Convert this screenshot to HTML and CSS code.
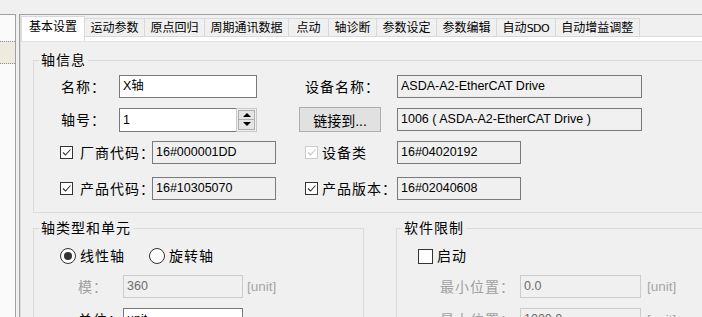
FILE: index.html
```html
<!DOCTYPE html>
<html lang="zh-CN">
<head>
  <meta charset="UTF-8">
  <title>轴设置</title>
  <link rel="stylesheet" href="styles.css">
</head>
<body>
  <div class="window">
    <div class="tree">
      <div class="tree-item"></div>
    </div>

    <div class="tabs">
      <div class="tab-strip">
        <div class="tab active">基本设置</div>
        <div class="tab">运动参数</div>
        <div class="tab">原点回归</div>
        <div class="tab">周期通讯数据</div>
        <div class="tab">点动</div>
        <div class="tab">轴诊断</div>
        <div class="tab">参数设定</div>
        <div class="tab">参数编辑</div>
        <div class="tab">自动<span class="lat">SDO</span></div>
        <div class="tab">自动增益调整</div>
      </div>

      <div class="tab-page">
        <div class="page-body">
          <fieldset class="group group-info">
            <legend>轴信息</legend>
            <div class="group-body">
              <div class="row">
                <div class="half">
                  <span class="lbl">名称：</span>
                  <div class="box w-name">X轴</div>
                </div>
                <div class="half-r">
                  <span class="lbl lbl-r">设备名称：</span>
                  <div class="box ro w-long">ASDA-A2-EtherCAT Drive</div>
                </div>
              </div>

              <div class="row row-tall">
                <div class="half">
                  <span class="lbl">轴号：</span>
                  <div class="spin">
                    <div class="box spin-input">1</div>
                    <div class="spin-btns">
                      <div class="spin-btn"><span class="arrow-up"></span></div>
                      <div class="spin-btn"><span class="arrow-down"></span></div>
                    </div>
                  </div>
                </div>
                <div class="half-r">
                  <button class="btn">链接到...</button>
                  <div class="box ro w-long">1006 ( ASDA-A2-EtherCAT Drive )</div>
                </div>
              </div>

              <div class="row row-wide-gap">
                <div class="half">
                  <span class="chk first"><svg viewBox="0 0 11 11"><path d="M2 5.5 L4.5 8 L9.5 2.5"/></svg></span>
                  <span class="lbl lbl-chk">厂商代码：</span>
                  <div class="box ro w-code">16#000001DD</div>
                </div>
                <div class="half-r">
                  <span class="chk right disabled"><svg viewBox="0 0 11 11"><path d="M2 5.5 L4.5 8 L9.5 2.5"/></svg></span>
                  <span class="lbl lbl-chk-r">设备类</span>
                  <div class="box ro w-code">16#04020192</div>
                </div>
              </div>

              <div class="row">
                <div class="half">
                  <span class="chk first"><svg viewBox="0 0 11 11"><path d="M2 5.5 L4.5 8 L9.5 2.5"/></svg></span>
                  <span class="lbl lbl-chk">产品代码：</span>
                  <div class="box ro w-code">16#10305070</div>
                </div>
                <div class="half-r">
                  <span class="chk right"><svg viewBox="0 0 11 11"><path d="M2 5.5 L4.5 8 L9.5 2.5"/></svg></span>
                  <span class="lbl lbl-chk-r">产品版本：</span>
                  <div class="box ro w-code">16#02040608</div>
                </div>
              </div>
            </div>
          </fieldset>

          <div class="lower">
            <fieldset class="group group-type">
              <legend>轴类型和单元</legend>
              <div class="group-body">
                <div class="opt-row">
                  <label class="radio-item">
                    <span class="radio on"></span>
                    <span class="opt-text">线性轴</span>
                  </label>
                  <label class="radio-item">
                    <span class="radio"></span>
                    <span class="opt-text">旋转轴</span>
                  </label>
                </div>
                <div class="field-row">
                  <span class="lbl lbl-off lbl-unit">模：</span>
                  <div class="box off w-mid">360</div>
                  <span class="unit">[unit]</span>
                </div>
                <div class="field-row">
                  <span class="lbl lbl-unit">单位：</span>
                  <div class="box w-mid">unit</div>
                </div>
              </div>
            </fieldset>

            <fieldset class="group group-limit">
              <legend>软件限制</legend>
              <div class="group-body">
                <div class="opt-row">
                  <span class="chk chk-lg first"></span>
                  <span class="opt-text">启动</span>
                </div>
                <div class="field-row">
                  <span class="lbl lbl-off lbl-pos">最小位置：</span>
                  <div class="box off w-pos">0.0</div>
                  <span class="unit unit-r">[unit]</span>
                </div>
                <div class="field-row">
                  <span class="lbl lbl-off lbl-pos">最大位置：</span>
                  <div class="box off w-pos">1000.0</div>
                  <span class="unit unit-r">[unit]</span>
                </div>
              </div>
            </fieldset>
          </div>
        </div>
      </div>
    </div>
  </div>
</body>
</html>
```

FILE: styles.css
```css
* { box-sizing: border-box; }
html, body { margin: 0; height: 100%; }
body {
  background: #f0f0f0;
  font-family: "Liberation Sans", "Noto Sans CJK SC", sans-serif;
  font-size: 14px;
  color: #000;
  overflow: hidden;
}

.window { display: flex; padding-top: 14px; height: 317px; }

/* left tree */
.tree {
  width: 16px;
  flex: none;
  border-top: 1px solid #a0a0a0;
  border-right: 1px solid #a0a0a0;
  background: #fafafa;
  padding-top: 26px;
}
.tree-item {
  height: 23px;
  background: #eeeadd;
  border-top: 1px dotted #8f8f8f;
  border-bottom: 1px dotted #8f8f8f;
}

/* tab control */
.tabs {
  flex: 1;
  min-width: 0;
  margin-left: 3px;
  padding-left: 1px;
  border-top: 1px solid #a0a0a0;
  border-left: 1px solid #a0a0a0;
  box-shadow: inset 1px 0 #dcdcdc;
}
.tab-strip {
  display: flex;
  align-items: flex-end;
  height: 21px;
}
.tab {
  flex: none;
  height: 18px;
  min-width: 41px;
  margin-left: -1px;
  padding: 1px 5.5px 0;
  border: 1px solid #d9d9d9;
  border-bottom: none;
  background: #f0f0f0;
  font-size: 12px;
  line-height: 16px;
  text-align: center;
  white-space: nowrap;
}
.tab .lat { font-size: 11px; font-family: "DejaVu Sans", sans-serif; letter-spacing: -0.5px; }
.tab.active {
  position: relative;
  z-index: 1;
  margin-left: 0;
  height: 25px;
  margin-bottom: -5px;
  padding: 2px 7px 0;
  background: #fff;
}

.tab-page {
  border-top: 1px solid #d9d9d9;
  background: #fff;
  padding-top: 4px;
}
.page-body {
  background: #f0f0f0;
  border-top: 1px solid #e3e3e3;
  padding-left: 12px;
  padding-top: 9px;
  height: 300px;
}

/* group boxes */
.group {
  margin: 0;
  border: 1px solid #dcdcdc;
  padding: 5px 0 12px 5px;
  min-width: 0;
}
.group legend {
  padding: 0 2px;
  font-size: 14px;
  line-height: 19px;
  letter-spacing: 1px;
}
.group-body { padding-left: 22px; }
.group-info { width: 700px; }

.lower { display: flex; margin-top: 6px; }
.group-type { width: 331px; height: 120px; flex: none; }
.group-limit { width: 400px; height: 120px; margin-left: 32px; flex: none; }
.group-limit .group-body { padding-left: 17px; }

/* rows */
.row { display: flex; align-items: center; height: 23px; margin-bottom: 9px; }
.row:last-child { margin-bottom: 0; }
.row-tall { height: 25px; }
.row-wide-gap { margin-bottom: 13px; }
.half { display: flex; align-items: center; width: 238px; flex: none; }
.half-r { display: flex; align-items: center; }

.lbl { flex: none; width: 58px; letter-spacing: 1px; white-space: nowrap; line-height: 20px; }
.lbl-r { width: 98px; padding-left: 6px; }
.lbl-chk { width: 72px; }
.lbl-chk-r { width: 75px; }
.lbl-off { color: #a0a0a0; }
.lbl-unit { width: 45px; margin-left: 17px; }
.lbl-pos { width: 80px; margin-left: 21px; }

/* text boxes */
.box {
  flex: none;
  height: 23px;
  border: 1px solid #7a7a7a;
  background: #fff;
  padding: 0 3px;
  font-size: 12.5px;
  line-height: 21px;
  white-space: nowrap;
  overflow: hidden;
}
.box.ro { background: #f0f0f0; }
.box.off { background: #f0f0f0; border-color: #cccccc; color: #6d6d6d; }
.w-name { width: 138px; }
.w-long { width: 245px; }
.w-code { width: 124px; }
.w-mid { width: 120px; }
.w-pos { width: 121px; }

.unit { margin-left: 4px; color: #a5a5a5; font-size: 13.5px; }
.unit-r { margin-left: 6px; }

/* spin box */
.spin { display: flex; height: 24px; }
.spin-input { width: 117px; height: 24px; border-right: none; line-height: 22px; }
.spin-btns {
  width: 21px;
  border: 1px solid #c8c8c8;
  padding: 1px;
  display: flex;
  flex-direction: column;
  background: #f0f0f0;
}
.spin-btn {
  flex: 1;
  background: #e5e5e5;
  border: 1px solid #adadad;
  display: flex;
  align-items: center;
  justify-content: center;
}
.spin-btn + .spin-btn { margin-top: -1px; }
.arrow-up, .arrow-down { width: 0; height: 0; border-left: 4px solid transparent; border-right: 4px solid transparent; }
.arrow-up { border-bottom: 4px solid #000; }
.arrow-down { border-top: 4px solid #000; }

/* button */
.btn {
  flex: none;
  width: 82px;
  height: 25px;
  margin-right: 16px;
  background: #e1e1e1;
  border: 1px solid #adadad;
  font-family: inherit;
  font-size: 14px;
  padding: 0;
  color: #000;
}

/* check boxes and radios */
.chk {
  flex: none;
  width: 13px;
  height: 13px;
  border: 1px solid #333;
  background: #fff;
  display: flex;
  align-items: center;
  justify-content: center;
  margin-right: 7px;
}
.chk svg { width: 11px; height: 11px; }
.chk path { fill: none; stroke: #333; stroke-width: 1.1; }
.chk.first { margin-left: -1px; }
.chk.right { margin-left: 6px; margin-right: 4px; }
.chk.disabled { border-color: #cccccc; }
.chk.disabled path { stroke: #c4c4c4; }
.chk-lg { width: 15px; height: 15px; margin-right: 4px; }

.opt-row { display: flex; align-items: center; height: 16px; margin-top: 5px; margin-bottom: 11px; }
.opt-text { letter-spacing: 1px; line-height: 20px; }
.radio-item { display: flex; align-items: center; width: 89px; }
.radio-item:first-child { margin-left: -1px; }
.radio {
  width: 16px;
  height: 16px;
  border: 1px solid #333;
  border-radius: 50%;
  background: #fff;
  display: flex;
  align-items: center;
  justify-content: center;
  margin-right: 4px;
}
.radio.on::after {
  content: "";
  width: 8px;
  height: 8px;
  border-radius: 50%;
  background: #333;
}

.field-row { display: flex; align-items: center; height: 23px; margin-bottom: 10px; }
```
